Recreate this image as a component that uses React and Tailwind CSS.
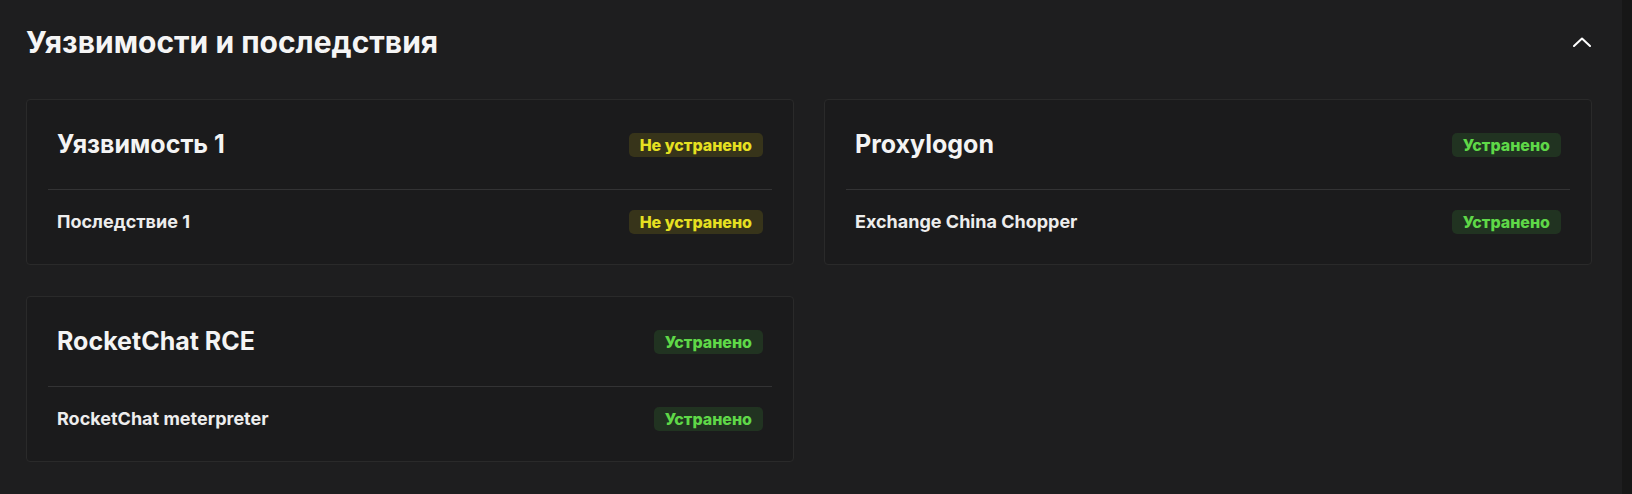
const items = [
  {
    title: 'Уязвимость 1',
    status: 'open',
    effects: [{ name: 'Последствие 1', status: 'open' }],
  },
  {
    title: 'Proxylogon',
    status: 'fixed',
    effects: [{ name: 'Exchange China Chopper', status: 'fixed' }],
  },
  {
    title: 'RocketChat RCE',
    status: 'fixed',
    effects: [{ name: 'RocketChat meterpreter', status: 'fixed' }],
  },
];

function StatusBadge({ status }) {
  if (status === 'open') {
    return (
      <span className="flex h-[24px] items-center rounded-[5px] bg-[#37341a] px-[11px] text-[16px] font-extrabold text-[#e6e021]">
        Не устранено
      </span>
    );
  }
  return (
    <span className="flex h-[24px] items-center rounded-[5px] bg-[#213321] px-[11px] text-[16px] font-extrabold text-[#5fd848]">
      Устранено
    </span>
  );
}

function VulnCard({ item }) {
  return (
    <div className="rounded-[4px] border border-[#2a2a2a] bg-[#1b1b1c] px-[21px] pb-[10px]">
      <div className="flex h-[90px] items-center justify-between border-b border-[#333334] px-[9px]">
        <h3 className="text-[25px] leading-none font-bold text-[#f4f4f4]">{item.title}</h3>
        <StatusBadge status={item.status} />
      </div>
      {item.effects.map((effect) => (
        <div key={effect.name} className="flex h-[64px] items-center justify-between px-[9px]">
          <span className="text-[18px] leading-none font-bold text-[#ededed]">{effect.name}</span>
          <StatusBadge status={effect.status} />
        </div>
      ))}
    </div>
  );
}

export default function App() {
  return (
    <div className="flex min-h-[494px] w-full bg-[#171717] font-['Inter',sans-serif]">
      <div className="w-[1622px] bg-[#1e1e1f] pr-[30px] pb-[30px] pl-[26px]">
        <div className="flex h-[84px] items-center justify-between">
          <h2 className="text-[30px] leading-none font-bold text-[#f5f5f5]">
            Уязвимости и последствия
          </h2>
          <button className="flex h-[20px] w-[20px] items-center justify-center text-white">
            <svg width="18" height="10" viewBox="0 0 18 10" fill="none">
              <path d="M1 9L9 1.5L17 9" stroke="currentColor" strokeWidth="2" strokeLinecap="round" strokeLinejoin="round" />
            </svg>
          </button>
        </div>

        <div className="mt-[15px] grid grid-cols-2 gap-x-[30px] gap-y-[31px]">
          {items.map((item) => (
            <VulnCard key={item.title} item={item} />
          ))}
        </div>
      </div>
    </div>
  );
}
